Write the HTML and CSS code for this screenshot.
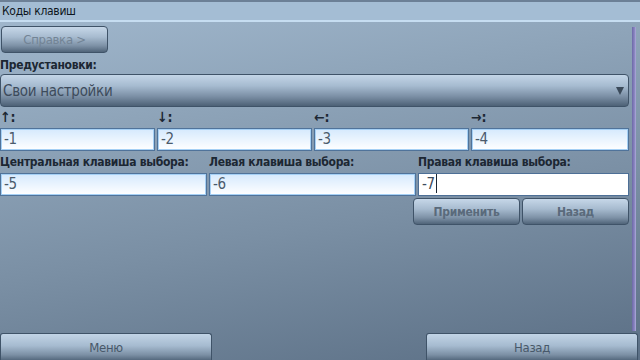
FILE: index.html
```html
<!DOCTYPE html>
<html>
<head>
    <title>Коды клавиш</title>
    <link rel="stylesheet" href="styles.css">
</head>
<body>
    <div class="titlebar">Коды клавиш</div>

    <div class="main">
        <div class="scrollbar"></div>

        <button class="btn help-btn">Справка &gt;</button>

        <div class="label">Предустановки:</div>
        <div class="select">
            <span>Свои настройки</span>
            <span class="arrow"></span>
        </div>

        <div class="row four">
            <div class="field">
                <div class="label key">↑:</div>
                <div class="input">-1</div>
            </div>
            <div class="field">
                <div class="label key">↓:</div>
                <div class="input">-2</div>
            </div>
            <div class="field">
                <div class="label key">←:</div>
                <div class="input">-3</div>
            </div>
            <div class="field">
                <div class="label key">→:</div>
                <div class="input">-4</div>
            </div>
        </div>

        <div class="row three">
            <div class="field">
                <div class="label">Центральная клавиша выбора:</div>
                <div class="input">-5</div>
            </div>
            <div class="field">
                <div class="label">Левая клавиша выбора:</div>
                <div class="input">-6</div>
            </div>
            <div class="field">
                <div class="label">Правая клавиша выбора:</div>
                <div class="input focused">-7<span class="caret"></span></div>
            </div>
        </div>

        <div class="actions">
            <button class="btn bold">Применить</button>
            <button class="btn bold">Назад</button>
        </div>
    </div>

    <div class="softkeys">
        <button class="btn soft">Меню</button>
        <button class="btn soft">Назад</button>
    </div>
</body>
</html>
```

FILE: styles.css
```css
/* --- S60 style theme --- */
:root {
    --label-color: #1c2733;
    --value-color: #4b5b6c;
    --muted-color: #738495;
    --frame-color: #3f5368;
}

html, body {
    margin: 0;
    padding: 0;
}

body {
    width: 640px;
    height: 360px;
    overflow: hidden;
    display: flex;
    flex-direction: column;
    font-family: "DejaVu Sans Condensed", "DejaVu Sans", sans-serif;
    letter-spacing: -0.3px;
    background: linear-gradient(170deg, #a2b9cf 0%, #8ea4b9 30%, #7a8fa4 60%, #5b6f85 100%);
}

/* --- TITLE --- */
.titlebar {
    height: 18px;
    line-height: 18px;
    padding-left: 2px;
    font-size: 12px;
    color: #0d1620;
    background-color: #a4bdd4;
    border-top: 2px solid #6c8096;
    border-bottom: 2px solid #c6ddf1;
}

/* --- MAIN --- */
.main {
    flex: 1;
    position: relative;
    padding-top: 4px;
}

.scrollbar {
    position: absolute;
    top: 5px;
    left: 632px;
    width: 4px;
    height: 304px;
    background: linear-gradient(to right, #6d68a8, #8e8ac4 70%, #b3b0dc);
}

.label {
    font-size: 12px;
    font-weight: bold;
    color: var(--label-color);
    height: 16px;
    line-height: 16px;
    white-space: nowrap;
}
.label.key { font-size: 14px; height: 17px; line-height: 17px; letter-spacing: 0; }

.btn {
    display: flex;
    align-items: center;
    justify-content: center;
    box-sizing: border-box;
    padding: 0;
    font-family: inherit;
    letter-spacing: inherit;
    font-size: 12px;
    color: var(--muted-color);
    border: 1px solid var(--frame-color);
    border-radius: 4px;
    background: linear-gradient(to bottom, #c6d7e8 0%, #a7bbcf 40%, #7d91a6 75%, #506479 100%);
}
.btn.bold { font-weight: bold; font-size: 12px; color: #5a6a7b; }

.help-btn {
    width: 107px;
    height: 27px;
    margin-left: 1px;
    margin-bottom: 4px;
    font-size: 13px;
}

.select {
    display: flex;
    align-items: center;
    justify-content: space-between;
    box-sizing: border-box;
    width: 629px;
    height: 33px;
    margin-top: 1px;
    padding: 0 4px 0 2px;
    font-size: 15px;
    color: #3d4b5b;
    border: 1px solid var(--frame-color);
    border-radius: 4px;
    background: linear-gradient(to bottom, #c3d5e7 0%, #a6bbd0 35%, #7a8ea4 70%, #4d6176 100%);
}
.select .arrow {
    width: 0;
    height: 0;
    border-left: 4px solid transparent;
    border-right: 4px solid transparent;
    border-top: 8px solid #3b4a5a;
}

/* --- FIELDS --- */
.row {
    display: grid;
    column-gap: 2px;
    width: 629px;
}
.row.four { grid-template-columns: 155px 155px 155px 158px; margin-top: 2px; }
.row.three { grid-template-columns: 207px 207px 211px; margin-top: 3px; }
.row.three .label { height: 17px; line-height: 17px; }

.input {
    box-sizing: border-box;
    height: 23px;
    margin-top: 2px;
    padding-left: 3px;
    line-height: 21px;
    font-size: 15px;
    color: var(--value-color);
    border: 1px solid #50739a;
    box-shadow: inset 0 0 0 1px #a5d0f5;
    background: linear-gradient(to bottom, #d5e9fd, #ffffff);
}
.input.focused {
    background: #ffffff;
    box-shadow: none;
    border-color: #4d6f96;
    color: #3c4b5b;
}
.caret {
    display: inline-block;
    width: 1px;
    height: 19px;
    vertical-align: -4px;
    margin-left: 1px;
    background-color: #1c2733;
}

.actions {
    display: flex;
    gap: 2px;
    justify-content: flex-end;
    width: 629px;
    margin-top: 2px;
}
.actions .btn { width: 107px; height: 27px; }

/* --- SOFTKEYS --- */
.softkeys {
    display: flex;
    justify-content: space-between;
    height: 27px;
}
.softkeys .btn {
    width: 212px;
    height: 27px;
    font-size: 13px;
    color: #485869;
    border-radius: 3px 3px 0 0;
    border-bottom: none;
    background: linear-gradient(to bottom, #c2d4e6 0%, #a6bbd0 45%, #7c90a5 80%, #55697e 100%);
}
.softkeys .btn:last-child { margin-right: 2px; }
```
